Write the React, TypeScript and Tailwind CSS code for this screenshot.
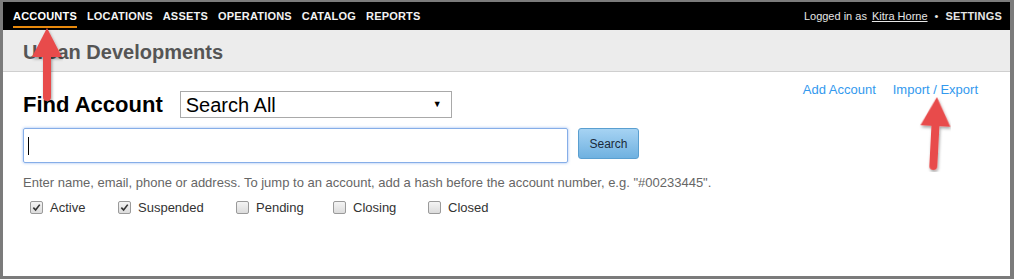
import React from "react";

const navItems = ["ACCOUNTS", "LOCATIONS", "ASSETS", "OPERATIONS", "CATALOG", "REPORTS"];

const statuses = [
  { label: "Active", checked: true, w: "w-[88px]" },
  { label: "Suspended", checked: true, w: "w-[118px]" },
  { label: "Pending", checked: false, w: "w-[97px]" },
  { label: "Closing", checked: false, w: "w-[95px]" },
  { label: "Closed", checked: false, w: "w-[80px]" },
];

// red annotation arrow pointing up
function Arrow({ className, tilt = 0 }: { className: string; tilt?: number }) {
  return (
    <svg className={className} viewBox="0 0 32 76" width="32" height="76">
      <defs>
        <filter id="shade" x="-50%" y="-50%" width="200%" height="200%">
          <feDropShadow dx="1" dy="2" stdDeviation="1.5" floodColor="#000" floodOpacity="0.35" />
        </filter>
      </defs>
      <g filter="url(#shade)" transform={`rotate(${tilt} 16 38)`}>
        <polygon points="16,1 31,30 1,30" fill="#e84c4c" />
        <line x1="16" y1="28" x2="16" y2="70" stroke="#e84c4c" strokeWidth="8" strokeLinecap="round" />
      </g>
    </svg>
  );
}

function CheckBox({ checked }: { checked: boolean }) {
  return (
    <span className="flex h-[13px] w-[13px] items-center justify-center rounded-[2px] border border-[#9a9a9a] bg-gradient-to-b from-[#f4f4f4] to-[#dcdcdc]">
      {checked && (
        <svg viewBox="0 0 10 10" width="9" height="9">
          <path d="M1.5 5.2 L4 7.8 L8.6 1.8" fill="none" stroke="#333" strokeWidth="1.8" />
        </svg>
      )}
    </span>
  );
}

export default function App() {
  return (
    <div
      className="relative h-[279px] w-[1014px] bg-[#7b7b7b] pb-[3px] pl-[3px] pr-[4px] pt-[2px]"
      style={{ fontFamily: '"Liberation Sans", Arial, sans-serif' }}
    >
      <div className="flex h-full flex-col bg-white">
        {/* top nav */}
        <div className="flex h-[28px] items-center justify-between bg-black pl-[10px] pr-[8px] text-[11px] text-white">
          <div className="flex items-center gap-[10px] font-bold tracking-[0.2px]">
            {navItems.map((item, i) => (
              <span key={item} className={i === 0 ? "relative text-white" : "text-[#f2f2f2]"}>
                {item}
                {i === 0 && <span className="absolute -bottom-[4px] left-0 right-0 h-[2px] bg-[#e8890c]" />}
              </span>
            ))}
          </div>
          <div className="flex items-center text-[#e6e6e6]">
            <span>Logged in as</span>
            <span className="ml-[5px] underline">Kitra Horne</span>
            <span className="mx-[7px]">•</span>
            <span className="font-bold tracking-[0.2px]">SETTINGS</span>
          </div>
        </div>

        {/* page header */}
        <div className="flex h-[42px] items-center border-b border-[#cfcfcf] bg-[#ececec] pl-[20px] pt-[3px]">
          <h1 className="text-[20px] font-bold text-[#555]">Urban Developments</h1>
        </div>

        {/* content */}
        <div className="flex flex-col pl-[20px] pr-[32px]">
          <div className="mt-[11px] flex items-start justify-between">
            <div className="mt-[8px] flex items-center">
              <h2 className="text-[22px] font-bold leading-[26px] text-black">Find Account</h2>
              <div className="ml-[17px] flex h-[27px] w-[272px] items-center justify-between border border-[#a9a9a9] bg-white pl-[5px] pr-[9px]">
                <span className="text-[20px] leading-[24px] text-black">Search All</span>
                <span className="text-[9px] text-black">▼</span>
              </div>
            </div>
            <div className="-mt-[3px] flex gap-[17px] text-[13px] text-[#3399ee]">
              <span>Add Account</span>
              <span>Import / Export</span>
            </div>
          </div>

          <div className="mt-[10px] flex items-start">
            <div className="flex h-[35px] w-[545px] items-center rounded-[2px] border border-[#86aee8] pl-[4px] shadow-[0_0_3px_rgba(80,140,230,0.6)]">
              <span className="h-[18px] w-[1px] bg-black" />
            </div>
            <button className="ml-[10px] h-[31px] w-[61px] rounded-[3px] border border-[#5a9fd0] bg-gradient-to-b from-[#a6d3f3] to-[#6fb1e0] text-[12px] text-[#1a2a3a]">
              Search
            </button>
          </div>

          <p className="mt-[12px] text-[13px] leading-[16px] text-[#666]">
            Enter name, email, phone or address. To jump to an account, add a hash before the account number, e.g. "#00233445".
          </p>

          <div className="mt-[7px] flex items-center pl-[7px] text-[13px] text-[#333]">
            {statuses.map((s) => (
              <label key={s.label} className={`flex items-center gap-[7px] ${s.w}`}>
                <CheckBox checked={s.checked} />
                <span>{s.label}</span>
              </label>
            ))}
          </div>
        </div>
      </div>

      {/* annotation arrows */}
      <Arrow className="absolute left-[31px] top-[27px]" />
      <Arrow className="absolute left-[919px] top-[96px]" tilt={3} />
    </div>
  );
}
